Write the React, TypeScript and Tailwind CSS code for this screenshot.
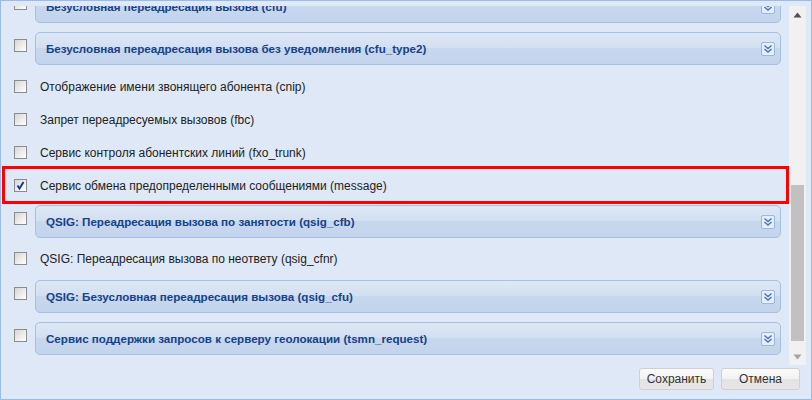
import React from "react";

const font = "font-['Tahoma','Liberation_Sans',Arial,sans-serif]";

const CheckBox = ({ checked = false }: { checked?: boolean }) => (
  <div className="w-[13px] h-[13px] border border-[#8c8c8c] bg-[linear-gradient(135deg,#d6d6d6,#ffffff)] flex items-center justify-center shrink-0">
    {checked && (
      <svg width="11" height="11" viewBox="0 0 11 11">
        <path d="M2.5 5.5 L4.5 8.5 L8.5 2" stroke="#102f8f" strokeWidth="1.8" fill="none" />
      </svg>
    )}
  </div>
);

const Chevron = () => (
  <div className="w-[14px] h-[14px] border border-[#9cb6dc] rounded-[2px] bg-[#e4edf9] flex items-center justify-center">
    <svg width="10" height="10" viewBox="0 0 10 10">
      <polyline points="1.5,1.5 5,4.5 8.5,1.5" stroke="#4b74b3" strokeWidth="1.4" fill="none" />
      <polyline points="1.5,5 5,8 8.5,5" stroke="#4b74b3" strokeWidth="1.4" fill="none" />
    </svg>
  </div>
);

const HeaderRow = ({ title, className = "" }: { title: string; className?: string }) => (
  <div className={`flex items-start ${className}`}>
    <div className="w-[34px] pl-[13px] pt-[7px]">
      <CheckBox />
    </div>
    <div className="w-[746px] h-[33px] rounded-[5px] border border-[#a4c0e6] bg-[linear-gradient(to_bottom,#dde7f5_0%,#d3e0f1_48%,#c7d7ee_50%,#c3d4ec_100%)] flex items-center justify-between pl-[10px] pr-[5px]">
      <span className="text-[11.6px] font-bold text-[#15428b] leading-none">{title}</span>
      <Chevron />
    </div>
  </div>
);

const PlainRow = ({ label, checked = false, className = "" }: { label: string; checked?: boolean; className?: string }) => (
  <div className={`flex items-center h-[33px] ${className}`}>
    <div className="w-[39px] pl-[13px]">
      <CheckBox checked={checked} />
    </div>
    <span className="text-[12px] text-[#222]">{label}</span>
  </div>
);

export default function App() {
  return (
    <div className={`w-[812px] h-[400px] bg-[#dfe8f6] border border-[#99bbe8] flex flex-col ${font}`}>
      <div className="flex h-[364px] pt-[5px]">
        <div className="flex-1 overflow-hidden">
          <div className="flex flex-col mt-[-16px]">
            <HeaderRow title="Безусловная переадресация вызова (cfu)" />
            <HeaderRow title="Безусловная переадресация вызова без уведомления (cfu_type2)" className="mt-[9px]" />
            <PlainRow label="Отображение имени звонящего абонента (cnip)" className="mt-[5px]" />
            <PlainRow label="Запрет переадресуемых вызовов (fbc)" />
            <PlainRow label="Сервис контроля абонентских линий (fxo_trunk)" />
            <div className="relative">
              <div className="absolute left-[1px] top-[-3px] w-[787px] h-[38px] border-[3px] border-[#ff0000]" />
              <PlainRow label="Сервис обмена предопределенными сообщениями (message)" checked />
            </div>
            <HeaderRow title="QSIG: Переадресация вызова по занятости (qsig_cfb)" className="mt-[3px]" />
            <PlainRow label="QSIG: Переадресация вызова по неответу (qsig_cfnr)" className="mt-[4px]" />
            <HeaderRow title="QSIG: Безусловная переадресация вызова (qsig_cfu)" className="mt-[5px]" />
            <HeaderRow title="Сервис поддержки запросов к серверу геолокации (tsmn_request)" className="mt-[9px]" />
          </div>
        </div>
        <div className="w-[17px] mr-[5px] bg-[#f1f1f1] flex flex-col items-center">
          <div className="h-[17px] flex items-center justify-center">
            <svg width="9" height="6" viewBox="0 0 9 6">
              <polygon points="4.5,0.5 8.5,5.5 0.5,5.5" fill="#505050" />
            </svg>
          </div>
          <div className="flex-1 w-full px-[2px] flex flex-col">
            <div className="mt-[162px] h-[156px] bg-[#c1c1c1]" />
          </div>
          <div className="h-[17px] flex items-center justify-center">
            <svg width="9" height="6" viewBox="0 0 9 6">
              <polygon points="0.5,0.5 8.5,0.5 4.5,5.5" fill="#a3a3a3" />
            </svg>
          </div>
        </div>
      </div>
      <div className="flex-1 flex justify-end items-start pt-[3px] pr-[11px] gap-[7px]">
        <button className="w-[75px] h-[22px] rounded-[3px] border border-[#d0d0d0] bg-[linear-gradient(to_bottom,#fafafa_0%,#f2f2f2_50%,#e3e3e3_51%,#e6e6e6_100%)] text-[12px] text-[#333]">
          Сохранить
        </button>
        <button className="w-[79px] h-[22px] rounded-[3px] border border-[#d0d0d0] bg-[linear-gradient(to_bottom,#fafafa_0%,#f2f2f2_50%,#e3e3e3_51%,#e6e6e6_100%)] text-[12px] text-[#333]">
          Отмена
        </button>
      </div>
    </div>
  );
}
